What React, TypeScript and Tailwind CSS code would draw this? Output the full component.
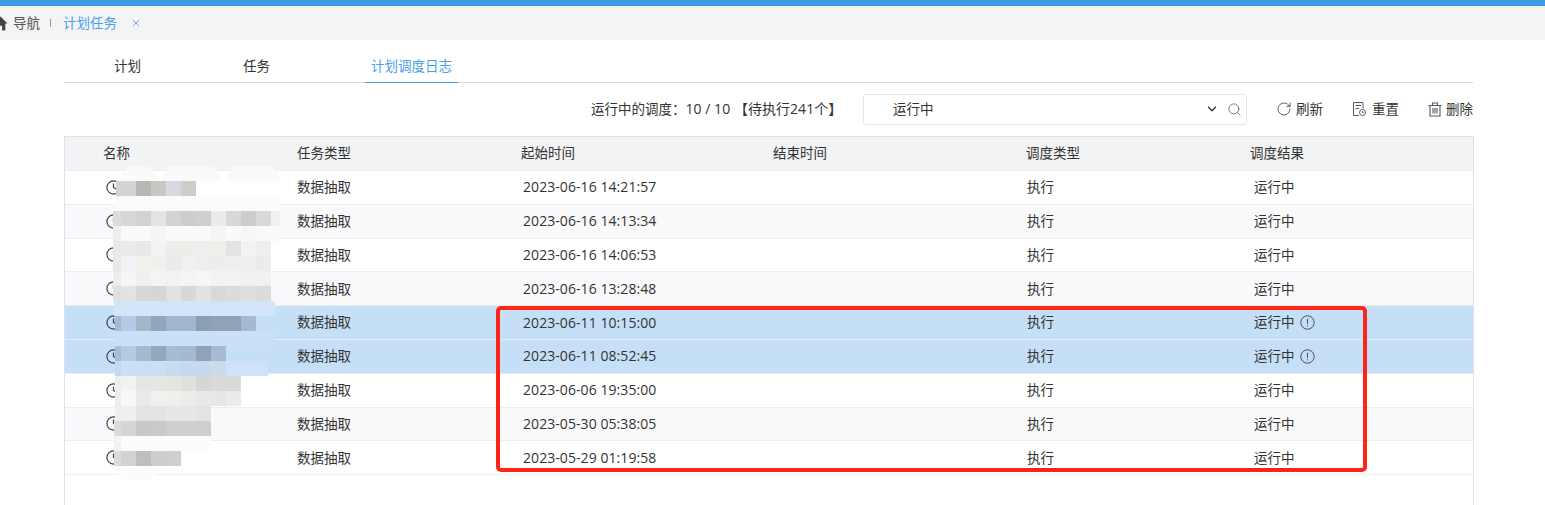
import { RotateCw, X, Search, ChevronDown } from "lucide-react";

const rows = [
  { start: "2023-06-16 14:21:57" },
  { start: "2023-06-16 14:13:34" },
  { start: "2023-06-16 14:06:53" },
  { start: "2023-06-16 13:28:48" },
  { start: "2023-06-11 10:15:00", selected: true },
  { start: "2023-06-11 08:52:45", selected: true },
  { start: "2023-06-06 19:35:00" },
  { start: "2023-05-30 05:38:05" },
  { start: "2023-05-29 01:19:58" },
];

// each band of the blurred-out names: left pad from x=113, width of the first sliver, block colours
const bands: { pad: number; first: number; end?: string; endWidth?: number; colors: string[] }[] = [
  { pad: 3, first: 5, end: "#ffffff", endWidth: 84, colors: ["#d3d3d3", "#d3d3d3", "#b8b7b4", "#c8c7c4", "#d6dae0", "#cdcecc"] },
  { pad: 2, first: 165, colors: ["#fbfbfb"] },
  { pad: 0, first: 8, colors: ["#dcdcdc", "#d6d7da", "#d3d2d2", "#e4e4e3", "#d2d3d6", "#cdcdce", "#d0cfd0", "#ebebec", "#d8d8da", "#cccccd", "#d9d8da", "#f0f0f2"] },
  { pad: 0, first: 8, colors: ["#eeeeee", "#f9fafc", "#f9fafc", "#f5f5f6", "#fafafc", "#fafafc", "#fafafc", "#f5f5f7", "#fafafc", "#f7f7f9", "#f9f9fb", "#fafafc"] },
  { pad: 0, first: 8, colors: ["#e9e9e9", "#eaebec", "#e8e8e8", "#f3f3f3", "#ebedec", "#edede9", "#eeeeec", "#eeeeea", "#e3e3e5", "#f3f1f1", "#eeeeec"] },
  { pad: 0, first: 8, colors: ["#e8e8e8", "#f0f2f4", "#f2f1ee", "#eff0ee", "#e9ebed", "#f1f0ed", "#eeeeee", "#ecedee", "#eeeeee", "#efeded", "#ebebea"] },
  { pad: 0, first: 8, colors: ["#ececec", "#f4f5f7", "#efefed", "#f4f4f5", "#f2f2f3", "#f4f4f5", "#f6f6f8", "#f2f2f3", "#f3f3f3", "#f1f1f1", "#f1f1f1"] },
  { pad: 0, first: 8, colors: ["#e0e0e0", "#e3e3e3", "#d8d8d8", "#d6d6da", "#e1e1e2", "#d8d8d7", "#e2e2e3", "#d8d9db", "#dcdcdc", "#dedede", "#dcdcdb"] },
  { pad: 1, first: 161, colors: ["#d3e5f8"] },
  { pad: 2, first: 6, colors: ["#a4bcd2", "#b2cbe8", "#a0b8cb", "#8fa9ba", "#a1b7d0", "#a0b8cd", "#8a9fb0", "#8fa3b8", "#8fa3b4", "#a2bbd2"] },
  { pad: 2, first: 160, colors: ["#c9e0f7"] },
  { pad: 2, first: 6, colors: ["#a8bdd2", "#b3cae5", "#a3bacc", "#92a9bb", "#a6bcd6", "#a3bbcf", "#8fa3b5", "#a3bcd3"] },
  { pad: 2, first: 6, end: "#cee3f8", endWidth: 42, colors: ["#c4d9ec", "#c9e0f5", "#c9dff3", "#c9dff3", "#c8dcf0", "#c6daee", "#c6daec", "#c9dcec"] },
  { pad: 2, first: 6, colors: ["#eeeeee", "#f2f2f3", "#e5e6e4", "#e6e6e4", "#e6e4df", "#dfe0de", "#d6d6d5", "#dadad7", "#dadadb"] },
  { pad: 2, first: 6, colors: ["#ededed", "#f8f8fa", "#eaeae8", "#f0f1ef", "#efefec", "#ebedeb", "#e8e9e7", "#e7e7e7", "#ebebeb"] },
  { pad: 2, first: 6, colors: ["#eeeeee", "#eeeff1", "#e3e3e3", "#e4e4e4", "#e7e7e9", "#e7e7e9", "#e3e3e5"] },
  { pad: 1, first: 7, colors: ["#dcdcdc", "#d5d5d6", "#c8c8c8", "#cacaca", "#cfcfd0", "#cfcfd0", "#cecece"] },
  { pad: 1, first: 7, colors: ["#f3f3f3", "#fcfcfc", "#fcfcfc", "#fcfcfc", "#fcfcfc", "#fcfcfc", "#fcfcfc"] },
  { pad: 1, first: 7, colors: ["#dcdcda", "#d3d2d3", "#bfc0be", "#cdcdce", "#cfd0cd"] },
];

function Mosaic() {
  return (
    <div className="absolute left-[113px] top-[166px] w-[167px] flex flex-col">
      <div className="flex h-[15px] pl-[8px] gap-[5px]">
        <div className="w-[36px] rounded-t-[18px] bg-[#fafafa]" />
        <div className="w-[60px] rounded-t-[15px] bg-[#fafafa]" />
        <div className="w-[55px] rounded-t-[15px] bg-[#fafafa]" />
      </div>
      {bands.map((band, i) => (
        <div key={i} className="flex h-[15px] overflow-hidden" style={{ paddingLeft: band.pad }}>
          {band.colors.map((color, j) => (
            <div
              key={j}
              className="h-full shrink-0"
              style={{ width: j === 0 ? band.first : 15, background: color }}
            />
          ))}
          {band.end && <div className="h-full shrink-0" style={{ width: band.endWidth, background: band.end }} />}
        </div>
      ))}
      <div className="h-[14px] w-[45px] ml-[2px] rounded-b-[14px] bg-[#fcfcfc]" />
    </div>
  );
}

function ClockIcon() {
  return (
    <svg width="15" height="15" viewBox="0 0 15 15" fill="none" stroke="#3b4256" strokeWidth="1.2">
      <circle cx="7.5" cy="7.5" r="6.6" />
      <path d="M7.5 3.5v4l2.5 1.5" />
    </svg>
  );
}

function AlertIcon() {
  return (
    <svg width="15" height="15" viewBox="0 0 15 15" fill="none" stroke="#4a4f60" strokeWidth="1">
      <circle cx="7.5" cy="7.5" r="6.7" />
      <path d="M7.5 3.8v5" />
      <path d="M7.5 10.2v1.2" />
    </svg>
  );
}

function ResetIcon() {
  return (
    <svg width="15" height="16" viewBox="0 0 15 16" fill="none" stroke="#555a68" strokeWidth="1">
      <path d="M7 14.5H1.5V1.5h9.5v6" />
      <path d="M3.5 4.5h5.5M3.5 7.5h3.5" />
      <circle cx="10.5" cy="11.5" r="3" />
      <path d="M10.5 10v1.5h1.3" />
    </svg>
  );
}

function TrashIcon() {
  return (
    <svg width="14" height="15" viewBox="0 0 14 15" fill="none" stroke="#555a68" strokeWidth="1.1">
      <path d="M0.5 3.5h13M4.5 3V1h5v2" />
      <path d="M2 3.5v10.5h10V3.5" />
      <path d="M5 6v5.5M7 6v5.5M9 6v5.5" />
    </svg>
  );
}

function HomeIcon() {
  return (
    <svg width="15" height="15" viewBox="0 0 14 14" fill="#444444">
      <path d="M7 0.5 0.5 7h2v6.5h3V9h3v4.5h3V7h2z" />
    </svg>
  );
}

export default function App() {
  return (
    <div className="relative h-[505px] w-[1545px] overflow-hidden bg-white text-[13.5px] text-[#333333] font-['Open_Sans','Noto_Sans_CJK_SC',sans-serif]">
      <div className="h-[6px] bg-[#3f9ae6]" />

      <div className="flex h-[34px] items-center bg-[#f4f4f4] text-[#555555]">
        <div className="-ml-[7px] mr-[5px]">
          <HomeIcon />
        </div>
        <span>导航</span>
        <span className="ml-[10px] h-[8px] w-px bg-[#999999]" />
        <span className="ml-[12px] text-[#4a9eea]">计划任务</span>
        <X className="ml-[13px] text-[#5f93d6]" size={12} strokeWidth={1.6} />
      </div>

      <div className="mx-[64px] mr-[72px] flex h-[43px] border-b border-[#d9d9d9] pl-[50px]">
        <div className="flex h-[42px] items-center pt-[11px]">
          <span className="whitespace-nowrap">计划</span>
        </div>
        <div className="ml-[102px] flex h-[42px] items-center pt-[11px]">
          <span className="whitespace-nowrap">任务</span>
        </div>
        <div className="ml-[95px] flex h-[43px] items-center border-b border-[#3f9ae6] px-[6px] pt-[11px] text-[#4a9eea]">
          <span className="whitespace-nowrap">计划调度日志</span>
        </div>
      </div>

      <div className="mr-[71px] flex h-[53px] items-center pb-[1px]">
        <span className="ml-[591px] w-[272px] whitespace-nowrap">
          运行中的调度：<span className="text-[14px] tracking-[0.04px]">10 / 10 【待执行241个】</span>
        </span>
        <div className="flex h-[31px] w-[384px] items-center rounded-[3px] border border-[#e6e6e6] pl-[29px] pr-[4px]">
          <span className="flex-1">运行中</span>
          <ChevronDown className="text-[#333333]" size={14} strokeWidth={2.4} />
          <Search className="ml-[8px] text-[#555555]" size={15} strokeWidth={1.2} />
        </div>
        <div className="ml-[29px] flex items-center gap-[4px]">
          <RotateCw className="text-[#444856]" size={16} strokeWidth={1.3} />
          <span>刷新</span>
        </div>
        <div className="ml-[29px] flex items-center gap-[5px]">
          <ResetIcon />
          <span>重置</span>
        </div>
        <div className="ml-[29px] flex items-center gap-[4px]">
          <TrashIcon />
          <span className="whitespace-nowrap">删除</span>
        </div>
      </div>

      <div className="mx-[64px] mr-[71px] h-[400px] border border-[#dfdff0]">
        <div className="grid h-[34px] grid-cols-[232px_224px_252px_253px_224px_1fr] items-center border-b border-[#eeeef2] bg-[#f2f3f5]">
          <span className="pl-[38px]">名称</span>
          <span>任务类型</span>
          <span>起始时间</span>
          <span>结束时间</span>
          <span>调度类型</span>
          <span>调度结果</span>
        </div>
        {rows.map((row, i) => (
          <div
            key={row.start}
            className={`grid h-[33.8px] grid-cols-[232px_224px_252px_253px_224px_1fr] items-center border-b ${
              row.selected
                ? "border-[#e2effb] bg-[#c5dff7]"
                : i % 2 === 1
                  ? "border-[#eeeeee] bg-[#f9f9fc]"
                  : "border-[#eeeeee] bg-white"
            }`}
          >
            <div className="pl-[41px]">
              <ClockIcon />
            </div>
            <span>数据抽取</span>
            <span className="-mt-px pl-[2px] text-[14px] tracking-[0.07px]">{row.start}</span>
            <span />
            <span className="pl-[1px]">执行</span>
            <span className="flex items-center gap-[5px] pl-[4px]">
              运行中
              {row.selected && <AlertIcon />}
            </span>
          </div>
        ))}
      </div>

      <Mosaic />

      {/* red annotation drawn over the table */}
      <div className="absolute left-[496px] top-[306px] h-[166px] w-[871px] rounded-[5px] border-4 border-[#ff2418]" />
    </div>
  );
}
